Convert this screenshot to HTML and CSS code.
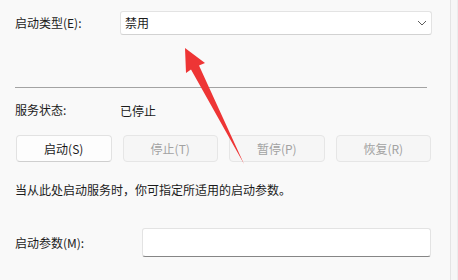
FILE: index.html
```html
<!DOCTYPE html>
<html lang="zh-CN">
<head>
<meta charset="utf-8">
<link rel="stylesheet" href="styles.css">
</head>
<body>
<div class="page">
  <div class="panel">
    <div class="row row-type">
      <span class="label">启动类型(E):</span>
      <div class="select">
        <span>禁用</span>
        <svg class="chev" width="10" height="6" viewBox="0 0 10 6"><path d="M1 1 L5 5 L9 1" fill="none" stroke="#5c5c5c" stroke-width="1"/></svg>
      </div>
    </div>
    <div class="divider"></div>
    <div class="row row-status">
      <span class="label">服务状态:</span>
      <span>已停止</span>
    </div>
    <div class="buttons">
      <button class="btn">启动(S)</button>
      <button class="btn disabled">停止(T)</button>
      <button class="btn disabled">暂停(P)</button>
      <button class="btn disabled">恢复(R)</button>
    </div>
    <p class="desc">当从此处启动服务时，你可指定所适用的启动参数。</p>
    <div class="row row-param">
      <span class="label label-param">启动参数(M):</span>
      <div class="input"></div>
    </div>
  </div>
  <div class="edge"></div>
  <svg class="arrow" width="458" height="280" viewBox="0 0 458 280">
    <polygon points="185,48 186,73 191,69.5 244,164 199,65.5 205,63" fill="#ee3535"/>
  </svg>
</div>
</body>
</html>
```
FILE: styles.css
```css
html, body {
  margin: 0;
  padding: 0;
}
body {
  background: #f9f9f9;
  font-family: "Noto Sans CJK SC", "Noto Sans", sans-serif;
  font-size: 12px;
  color: #1b1b1b;
}
.page {
  position: relative;
  width: 458px;
  height: 280px;
  display: flex;
  overflow: hidden;
}
.panel {
  width: 451px;
  height: 280px;
  box-sizing: border-box;
  border-right: 1px solid #e4e4e4;
  padding-left: 15px;
  padding-top: 11px;
}
.edge {
  flex: 1;
  background: #f6f6f6;
  border-right: 1px solid #ececec;
}
.row {
  display: flex;
  align-items: center;
}
.label {
  width: 105px;
  flex: none;
  line-height: 16px;
}
.row-type {
  height: 24px;
}
.select {
  width: 312px;
  height: 24px;
  box-sizing: border-box;
  background: #ffffff;
  border: 1px solid #e3e3e3;
  border-bottom-color: #d2d2d2;
  border-radius: 3px;
  display: flex;
  align-items: center;
  justify-content: space-between;
  padding-left: 4px;
  padding-right: 4px;
}
.select span {
  line-height: 16px;
}
.chev {
  display: block;
}
.divider {
  margin-top: 52px;
  width: 412px;
  height: 1px;
  background: #a3a3a3;
}
.row-status {
  margin-top: 14px;
  height: 16px;
}
.buttons {
  margin-top: 17px;
  margin-left: 1px;
  width: 415px;
  display: grid;
  grid-template-columns: repeat(4, 1fr);
  gap: 11px;
}
.btn {
  height: 27px;
  margin: 0;
  padding: 0;
  font: inherit;
  color: #1b1b1b;
  background: #fdfdfd;
  border: 1px solid #e2e2e2;
  border-bottom-color: #cfcfcf;
  border-radius: 4px;
}
.btn.disabled {
  color: #a2a2a2;
  background: #f6f6f6;
  border-color: #e6e6e6;
}
.desc {
  margin: 20px 0 0 0;
  line-height: 16px;
  height: 16px;
}
.row-param {
  margin-top: 30px;
  height: 29px;
}
.label-param {
  width: 127px;
}
.input {
  width: 289px;
  height: 29px;
  box-sizing: border-box;
  background: #ffffff;
  border: 1px solid #e3e3e3;
  border-bottom: 1px solid #868686;
  border-radius: 3px;
}
.arrow {
  position: absolute;
  left: 0;
  top: 0;
  pointer-events: none;
}
```
